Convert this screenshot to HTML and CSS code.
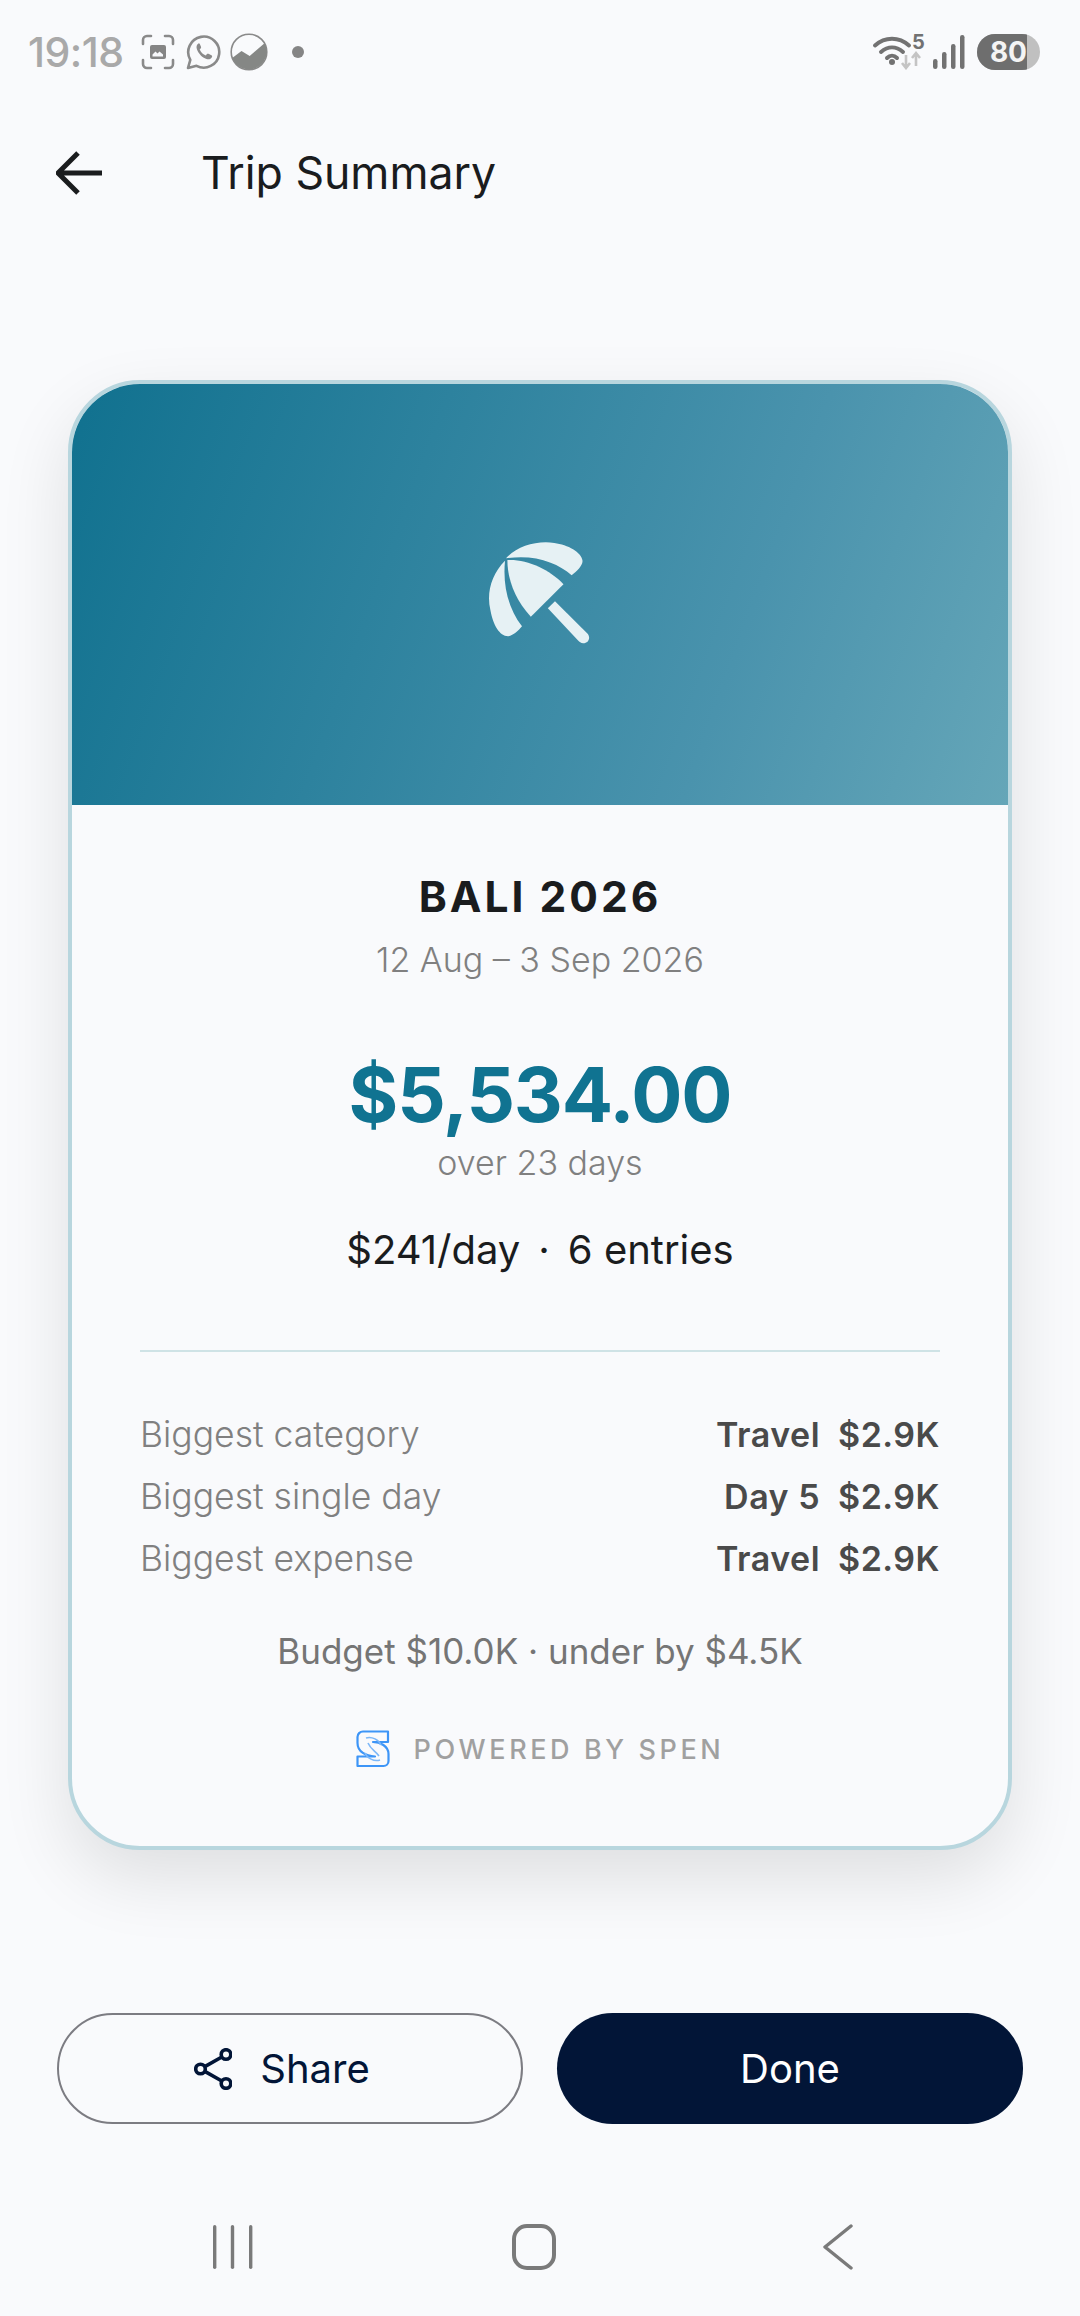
FILE: index.html
```html
<!DOCTYPE html>
<html lang="en">
<head>
  <meta charset="UTF-8">
  <meta name="viewport" content="width=device-width, initial-scale=1.0">
  <title>Trip Summary</title>
  <link rel="stylesheet" href="styles.css">
</head>
<body>
  <!-- Status bar -->
  <div class="statusbar">
    <div class="status-left">
      <span class="time">19:18</span>
      <svg class="st-shot" width="34" height="36" viewBox="0 0 34 36" fill="none">
        <path d="M2 10V6a4 4 0 0 1 4-4h4M24 2h4a4 4 0 0 1 4 4v4M32 26v4a4 4 0 0 1-4 4h-4M10 34H6a4 4 0 0 1-4-4v-4" stroke="#8a8a8a" stroke-width="2.6" stroke-linecap="round"/>
        <path d="M9 13a2 2 0 0 1 2-2h12a2 2 0 0 1 2 2v10a2 2 0 0 1-2 2H11a2 2 0 0 1-2-2z" fill="#858585"/>
        <path d="M11.500 22.500v-2l3-3 2 2 2-2 3.500 3v2z" fill="#f8f9fc"/>
      </svg>
      <svg class="st-wa" width="36" height="36" viewBox="0 0 36 36" fill="none">
        <path d="M2 34l2.300-8.200A15.500 15.500 0 1 1 10.500 31.800z" stroke="#8a8a8a" stroke-width="2.600" stroke-linejoin="round"/>
        <path d="M12.500 9.500c-2 1-2.500 3.500-1.500 6 1.500 4 5 8 9.500 9.500 2.500.8 4.500 0 5.500-2 .4-.8 0-1.300-.6-1.700l-2.900-1.500c-.7-.3-1.200-.2-1.600.3l-1 1.300c-2.800-1-5-3.300-6.200-6l1.100-1.200c.4-.5.4-1 .2-1.500l-1.200-2.800c-.3-.6-1-.8-1.300-.4z" fill="#8a8a8a"/>
      </svg>
      <svg class="st-chart" width="38" height="40" viewBox="0 0 38 40">
        <circle cx="19" cy="20" r="17.800" fill="none" stroke="#8a8a8a" stroke-width="1.600"/>
        <path d="M2.200 26L11.500 19L19.700 24L34.500 11.200A17.800 17.800 0 1 1 2.200 26Z" fill="#858785"/>
      </svg>
      <span class="st-dot"></span>
    </div>
    <div class="status-right">
      <svg width="52" height="36" viewBox="0 0 52 36" fill="none">
        <path d="M3 11.500C13 2.500 27 2.500 37 11.500" stroke="#727272" stroke-width="4" stroke-linecap="round"/>
        <path d="M9 18C16 12 24 12 31 18" stroke="#727272" stroke-width="4" stroke-linecap="round"/>
        <path d="M15 24C18 21 22 21 25 24" stroke="#727272" stroke-width="4" stroke-linecap="round"/>
        <circle cx="20" cy="28" r="3" fill="#727272"/>
        <path d="M34 21v13M30 29l4 5 4-5" stroke="#c4c4c4" stroke-width="2.600"/>
        <path d="M44 32V19M40 24l4-5 4 5" stroke="#c4c4c4" stroke-width="2.600"/>
      </svg>
      <span class="wifi-num">5</span>
      <svg class="st-signal" width="32" height="34" viewBox="0 0 32 34">
        <rect x="0" y="24" width="4.500" height="10" rx="2.200" fill="#727272"/>
        <rect x="9" y="17" width="4.500" height="17" rx="2.200" fill="#727272"/>
        <rect x="18" y="9" width="4.500" height="25" rx="2.200" fill="#727272"/>
        <rect x="27" y="0" width="4.500" height="34" rx="2.200" fill="#727272"/>
      </svg>
      <div class="battery"><span class="battery-fill">80</span></div>
    </div>
  </div>

  <div class="topbar">
    <svg width="46" height="46" viewBox="0 0 46 46" fill="none">
      <path d="M22 3L2 23l20 20M3 23h43" stroke="#1a1c1e" stroke-width="5"/>
    </svg>
    <h1>Trip Summary</h1>
  </div>

  <!-- Card -->
  <div class="card">
    <div class="card-banner">
      <svg class="umbrella" width="102" height="102" viewBox="205 130 300 300" fill="#e6f1f4">
        <path d="M258 178C290 142 350 125 400 133C440 138 480 160 483 185C484 200 465 218 451 228C410 190 340 165 258 178Z"/>
        <path d="M255 185C215 225 200 280 212 330C220 375 240 408 265 407C280 405 295 390 305 378C265 325 248 260 255 185Z"/>
        <path d="M262 183C320 180 385 210 427 254L331 350C285 300 262 240 262 183Z"/>
        <path d="M381 325L402 304L498 400C508 412 500 428 485 428C478 428 474 424 470 420Z"/>
      </svg>
    </div>
    <div class="card-body">
      <div class="trip-name">BALI 2026</div>
      <div class="trip-dates">12 Aug – 3 Sep 2026</div>
      <div class="trip-total">$5,534.00</div>
      <div class="trip-days">over 23 days</div>
      <div class="trip-stats"><span>$241/day</span><span>·</span><span>6 entries</span></div>
      <div class="divider"></div>
      <div class="row"><span class="row-label">Biggest category</span><span class="row-value"><span>Travel</span><span>$2.9K</span></span></div>
      <div class="row"><span class="row-label">Biggest single day</span><span class="row-value"><span>Day 5</span><span>$2.9K</span></span></div>
      <div class="row"><span class="row-label">Biggest expense</span><span class="row-value"><span>Travel</span><span>$2.9K</span></span></div>
      <div class="budget">Budget $10.0K · under by $4.5K</div>
      <div class="powered">
        <svg width="34" height="38" viewBox="0 0 34 38" fill="none">
          <path d="M32 1.500V12H17C24 12 32.500 16 32.500 24V31a5 5 0 0 1-5 5H1.500V26.500H19C10 26 1.500 22 1.500 13V7A5.500 5.500 0 0 1 7 1.500Z" stroke="#3d95f7" stroke-width="2.200" stroke-linejoin="round"/>
          <path d="M10 8C16 6 23 10 25 15M24 30C18 32 11 28 9 23M12 13C15 20 20 21 23 26" stroke="#7db8f8" stroke-width="1.600"/>
        </svg>
        <span>POWERED BY SPEN</span>
      </div>
    </div>
  </div>

  <div class="actions">
    <button class="btn btn-share">
      <svg width="38" height="42" viewBox="0 0 38 42" fill="none" stroke="#021537" stroke-width="3.600">
        <circle cx="32" cy="6.500" r="4.800"/>
        <circle cx="6.500" cy="21" r="4.800"/>
        <circle cx="32" cy="35.500" r="4.800"/>
        <path d="M27.800 9L10.800 18.600M10.800 23.400L27.800 33"/>
      </svg>
      Share
    </button>
    <button class="btn btn-done">Done</button>
  </div>

  <!-- Nav bar -->
  <div class="navbar">
    <svg width="42" height="44" viewBox="0 0 42 44" fill="#7a7a7a">
      <rect x="1" y="0" width="3.400" height="44" rx="1.700"/>
      <rect x="18.800" y="0" width="3.400" height="44" rx="1.700"/>
      <rect x="37" y="0" width="3.400" height="44" rx="1.700"/>
    </svg>
    <svg class="nav-home" width="44" height="46" viewBox="0 0 44 46" fill="none">
      <rect x="2" y="2" width="40" height="42" rx="13" stroke="#7a7a7a" stroke-width="4"/>
    </svg>
    <svg class="nav-back" width="30" height="46" viewBox="0 0 30 46" fill="none">
      <path d="M28 2L2 23l26 21" stroke="#7a7a7a" stroke-width="3.400" stroke-linecap="round" stroke-linejoin="round"/>
    </svg>
  </div>
</body>
</html>
```

FILE: styles.css
```css
* {
  margin: 0;
  padding: 0;
  box-sizing: border-box;
  font-family: Inter, "Noto Sans", sans-serif;
}

body {
  width: 1080px;
  height: 2316px;
  background-color: #f9fafc;
  color: #1a1c1e;
  overflow: hidden;
}

svg {
  display: block;
  flex-shrink: 0;
}

/* status bar */
.statusbar {
  height: 104px;
  display: flex;
  justify-content: space-between;
  align-items: center;
  padding: 0 40px 0 28px;
}

.status-left,
.status-right {
  display: flex;
  align-items: center;
}

.time {
  font-size: 41px;
  font-weight: 500;
  color: #a9a9a9;
  letter-spacing: -0.5px;
}

.st-shot {
  margin-left: 17px;
}

.st-wa {
  margin-left: 11px;
}

.st-chart {
  margin-left: 8px;
}

.st-dot {
  width: 12px;
  height: 12px;
  border-radius: 50%;
  background-color: #858585;
  margin-left: 24px;
}

.wifi-num {
  font-size: 20px;
  font-weight: 700;
  color: #727272;
  margin: -20px 0 0 -12px;
  width: 12px;
}

.st-signal {
  margin-left: 9px;
}

.battery {
  width: 63px;
  height: 36px;
  margin-left: 12px;
  border-radius: 18px;
  background-color: #c0c0c0;
  overflow: hidden;
}

.battery-fill {
  display: block;
  width: 50px;
  height: 36px;
  background-color: #6e6e6e;
  color: #f4f4f4;
  font-size: 28px;
  font-weight: 700;
  line-height: 36px;
  text-align: right;
}

/* header */
.topbar {
  height: 138px;
  display: flex;
  align-items: center;
  padding-left: 56px;
}

.topbar h1 {
  font-size: 44.6px;
  font-weight: 400;
  margin-left: 99px;
}

/* card */
.card {
  width: 944px;
  height: 1470px;
  margin: 138px 0 0 68px;
  border: 4px solid #b8d6de;
  border-radius: 72px;
  background-color: #f9fafc;
  box-shadow: 0 28px 70px rgba(0, 0, 0, 0.11);
  overflow: hidden;
}

.card-banner {
  height: 421px;
  display: flex;
  align-items: center;
  justify-content: center;
  background: linear-gradient(110deg, #10718f 0%, #4a93ad 70%, #65a6b8 100%);
}

.umbrella {
  margin: 0 3px 3px 0;
}

.card-body {
  padding: 62px 68px 0;
  text-align: center;
}

.trip-name {
  font-size: 42.5px;
  font-weight: 700;
  line-height: 60px;
  letter-spacing: 3px;
}

.trip-dates {
  font-size: 34px;
  font-weight: 300;
  line-height: 44px;
  margin-top: 11px;
  color: #808080;
}

.trip-total {
  font-size: 76px;
  font-weight: 700;
  line-height: 96px;
  margin-top: 64px;
  letter-spacing: -1.2px;
  color: #107391;
}

.trip-days {
  font-size: 34px;
  font-weight: 300;
  line-height: 44px;
  margin-top: -1px;
  color: #808080;
}

.trip-stats {
  display: flex;
  justify-content: center;
  gap: 18px;
  font-size: 40px;
  line-height: 52px;
  margin-top: 39px;
}

.divider {
  height: 2px;
  margin-top: 74px;
  background-color: #cfe3e6;
}

.row {
  display: flex;
  justify-content: space-between;
  align-items: center;
  height: 62px;
  font-size: 34px;
}

.divider + .row {
  margin-top: 51px;
}

.row-label {
  font-size: 35.5px;
  font-weight: 300;
  color: #808080;
}

.row-value {
  display: flex;
  gap: 18px;
  font-weight: 600;
  letter-spacing: 0.5px;
  color: #4a4a4a;
}

.budget {
  font-size: 35px;
  font-weight: 400;
  line-height: 48px;
  margin-top: 38px;
  color: #757575;
}

.powered {
  display: flex;
  justify-content: center;
  align-items: center;
  gap: 24px;
  height: 40px;
  margin-top: 54px;
  font-size: 27px;
  font-weight: 500;
  letter-spacing: 3.6px;
  color: #a0a0a0;
}

/* buttons */
.actions {
  display: flex;
  gap: 34px;
  margin: 163px 0 0 57px;
}

.btn {
  width: 466px;
  height: 111px;
  display: flex;
  align-items: center;
  justify-content: center;
  border-radius: 56px;
  font-size: 40px;
  cursor: pointer;
}

.btn-share {
  gap: 28px;
  padding-right: 16px;
  background-color: transparent;
  border: 2.500px solid #7c7c82;
  color: #021537;
}

.btn-done {
  background-color: #021537;
  border: none;
  color: #fff;
}

/* nav bar */
.navbar {
  display: flex;
  align-items: center;
  margin: 100px 0 0 212px;
}

.nav-home {
  margin-left: 258px;
}

.nav-back {
  margin-left: 267px;
}
```
